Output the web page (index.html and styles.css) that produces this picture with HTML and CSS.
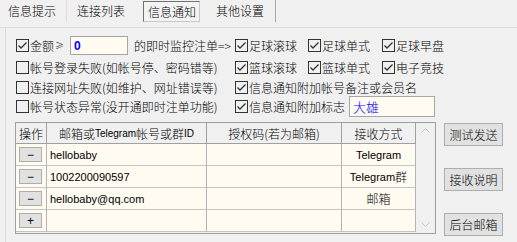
FILE: index.html
```html
<!DOCTYPE html>
<html lang="zh-CN">
<head>
    <meta charset="UTF-8">
    <title>信息通知</title>
    <link rel="stylesheet" href="styles.css">
</head>
<body>
    <div class="window">
        <!-- Tab strip -->
        <div class="tabs">
            <div class="tab tab-info">信息提示</div>
            <div class="tab tab-links">连接列表</div>
            <div class="tab tab-active">信息通知</div>
            <div class="tab tab-other">其他设置</div>
        </div>

        <div class="panel">
            <!-- Notification options -->
            <div class="options">
                <div class="cell">
                    <span class="box on"><svg viewBox="0 0 11 11"><polyline points="1.5,5.5 4,8 9.5,2.5"/></svg></span>
                    <span>金额</span><span class="ge">≥</span>
                    <input type="text" class="field amount" value="0">
                    <span class="after">的即时监控注单=&gt;</span>
                </div>
                <div class="cell"><span class="box on"><svg viewBox="0 0 11 11"><polyline points="1.5,5.5 4,8 9.5,2.5"/></svg></span>足球滚球</div>
                <div class="cell"><span class="box on"><svg viewBox="0 0 11 11"><polyline points="1.5,5.5 4,8 9.5,2.5"/></svg></span>足球单式</div>
                <div class="cell"><span class="box on"><svg viewBox="0 0 11 11"><polyline points="1.5,5.5 4,8 9.5,2.5"/></svg></span>足球早盘</div>

                <div class="cell"><span class="box"></span>帐号登录失败(如帐号停、密码错等)</div>
                <div class="cell"><span class="box on"><svg viewBox="0 0 11 11"><polyline points="1.5,5.5 4,8 9.5,2.5"/></svg></span>篮球滚球</div>
                <div class="cell"><span class="box on"><svg viewBox="0 0 11 11"><polyline points="1.5,5.5 4,8 9.5,2.5"/></svg></span>篮球单式</div>
                <div class="cell"><span class="box on"><svg viewBox="0 0 11 11"><polyline points="1.5,5.5 4,8 9.5,2.5"/></svg></span>电子竞技</div>

                <div class="cell"><span class="box"></span>连接网址失败(如维护、网址错误等)</div>
                <div class="cell wide"><span class="box on"><svg viewBox="0 0 11 11"><polyline points="1.5,5.5 4,8 9.5,2.5"/></svg></span>信息通知附加帐号备注或会员名</div>

                <div class="cell"><span class="box"></span>帐号状态异常(没开通即时注单功能)</div>
                <div class="cell wide">
                    <span class="box on"><svg viewBox="0 0 11 11"><polyline points="1.5,5.5 4,8 9.5,2.5"/></svg></span>信息通知附加标志
                    <input type="text" class="field flag" value="大雄">
                </div>
            </div>

            <!-- Receivers list and actions -->
            <div class="lower">
                <div class="grid-box">
                    <div class="grid">
                        <div class="hd">操作</div>
                        <div class="hd">邮箱或<span class="small">Telegram</span>帐号或群<span class="small">ID</span></div>
                        <div class="hd">授权码(若为邮箱)</div>
                        <div class="hd">接收方式</div>

                        <div class="td op"><button class="mini">−</button></div>
                        <div class="td addr">hellobaby</div>
                        <div class="td"></div>
                        <div class="td way">Telegram</div>

                        <div class="td op"><button class="mini">−</button></div>
                        <div class="td addr">1002200090597</div>
                        <div class="td"></div>
                        <div class="td way">Telegram<span class="cjk">群</span></div>

                        <div class="td op"><button class="mini">−</button></div>
                        <div class="td addr">hellobaby@qq.com</div>
                        <div class="td"></div>
                        <div class="td way"><span class="cjk">邮箱</span></div>

                        <div class="td op"><button class="mini">+</button></div>
                        <div class="td addr"></div>
                        <div class="td"></div>
                        <div class="td way"></div>
                    </div>
                    <div class="scroll">
                        <svg viewBox="0 0 9 5"><polyline points="0.5,4.5 4.5,0.5 8.5,4.5"/></svg>
                        <svg viewBox="0 0 9 5"><polyline points="0.5,0.5 4.5,4.5 8.5,0.5"/></svg>
                    </div>
                </div>

                <div class="actions">
                    <button class="btn">测试发送</button>
                    <button class="btn">接收说明</button>
                    <button class="btn">后台邮箱</button>
                </div>
            </div>
        </div>
    </div>
</body>
</html>
```

FILE: styles.css
```css
/* General */
body {
    margin: 0;
    background: #f0f0f0;
    font-family: "Noto Sans CJK SC", sans-serif;
    font-size: 12px;
    font-weight: 300;
    color: #000;
}

.window {
    width: 517px;
    height: 242px;
    overflow: hidden;
}

/* Tabs */
.tabs {
    display: flex;
    align-items: flex-start;
    height: 28px;
    box-sizing: border-box;
    border-bottom: 1px solid #dcdcdc;
}

.tab {
    height: 22px;
    line-height: 22px;
    white-space: nowrap;
}

.tab-info {
    padding: 0 10px 0 8px;
    border-right: 1px solid #dedede;
}

.tab-links {
    padding: 0 18px 0 10px;
}

.tab-active {
    margin-top: 1px;
    height: 19px;
    line-height: 19px;
    padding: 0 3px 0 4px;
    border: 1px solid;
    border-color: #707070 #c8c8c8 #c8c8c8 #707070;
    background: #f3f3f3;
}

.tab-other {
    padding: 0 11px 0 16px;
    border-right: 1px solid #a8a8a8;
}

/* Panel */
.panel {
    margin-left: 5px;
    border-left: 1px solid #dcdcdc;
    height: 214px;
}

.options {
    display: grid;
    grid-template-columns: 219px 73px 74px 1fr;
    grid-template-rows: 23px 21px 18px 20px;
    padding: 6px 0 0 10px;
}

.cell {
    display: flex;
    align-items: center;
    white-space: nowrap;
}

.cell.wide {
    grid-column: 2 / 5;
}

/* Checkboxes */
.box {
    width: 13px;
    height: 13px;
    box-sizing: border-box;
    border: 1px solid #333;
    margin-right: 1px;
    flex-shrink: 0;
    display: flex;
}

.box svg {
    width: 11px;
    height: 11px;
    fill: none;
    stroke: #333;
    stroke-width: 1.3;
}

.ge {
    font-size: 9px;
    margin-left: 1px;
}

/* Text fields */
.field {
    box-sizing: border-box;
    border: 1px solid #a6a6a6;
    background: #fffbf0;
    color: #0000ff;
    padding: 0 3px;
    margin: 0;
    outline: none;
}

.amount {
    width: 58px;
    height: 19px;
    margin-left: 6px;
    font-family: "Liberation Sans", sans-serif;
    font-weight: bold;
    font-size: 12px;
}

.after {
    margin-left: 6px;
}

.flag {
    width: 86px;
    height: 21px;
    margin-left: 4px;
    font-family: "Noto Sans CJK SC", sans-serif;
    font-weight: 300;
    font-size: 13px;
}

/* Lower part: list + buttons */
.lower {
    display: flex;
    align-items: flex-start;
    margin: 6px 0 0 9px;
}

.grid-box {
    display: flex;
    width: 421px;
    height: 112px;
    box-sizing: border-box;
    border: 1px solid #a0a0a0;
    background: #f0f0f0;
}

.grid {
    display: grid;
    grid-template-columns: 31px 160px 135px 74px;
    grid-template-rows: 21px repeat(4, 22px);
    width: 400px;
    align-self: flex-start;
}

.hd, .td {
    box-sizing: border-box;
    border-right: 1px solid #b4b4b4;
    border-bottom: 1px solid #c4c4c4;
    display: flex;
    align-items: center;
    white-space: nowrap;
    overflow: hidden;
}

.hd {
    justify-content: center;
    border-bottom-color: #a0a0a0;
    border-right-color: #a0a0a0;
}

.small {
    font-family: "Liberation Sans", sans-serif;
    font-weight: normal;
    font-size: 10px;
}

.td {
    background: #fffbf0;
    font-family: "Liberation Sans", sans-serif;
    font-weight: normal;
    font-size: 11px;
}

.td.addr {
    padding-left: 3px;
}

.td.way {
    justify-content: center;
}

.cjk {
    font-family: "Noto Sans CJK SC", sans-serif;
    font-weight: 300;
    font-size: 12px;
}

.td.op {
    padding-left: 3px;
}

.mini {
    width: 23px;
    height: 15px;
    padding: 0;
    border: 1px solid #adadad;
    background: #e1e1e1;
    font-family: "Liberation Sans", sans-serif;
    font-size: 12px;
    line-height: 12px;
    color: #000;
}

/* Scroll arrows */
.scroll {
    flex: 1;
    display: flex;
    flex-direction: column;
    justify-content: space-between;
    align-items: center;
    padding: 5px 0 6px;
}

.scroll svg {
    width: 9px;
    height: 5px;
    fill: none;
    stroke: #c4c4c4;
    stroke-width: 1;
}

/* Action buttons */
.actions {
    display: flex;
    flex-direction: column;
    gap: 22px;
    margin-left: 8px;
    padding-top: 1px;
}

.btn {
    width: 59px;
    height: 23px;
    padding: 0;
    border: 1px solid #adadad;
    background: #e1e1e1;
    font-family: "Noto Sans CJK SC", sans-serif;
    font-weight: 300;
    font-size: 12px;
    color: #000;
}
```
